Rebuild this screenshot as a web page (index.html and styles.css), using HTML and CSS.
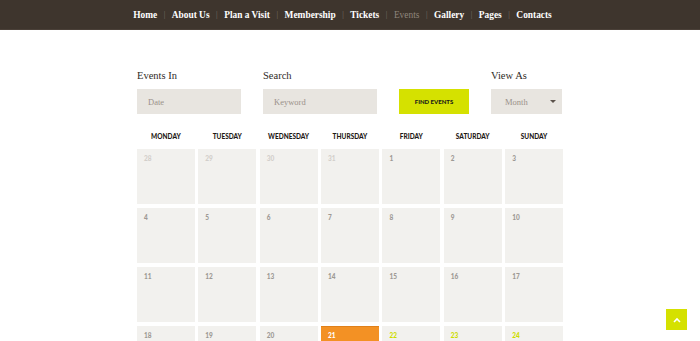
FILE: index.html
```html
<!DOCTYPE html>
<html lang="en">
<head>
    <meta charset="UTF-8">
    <meta name="viewport" content="width=device-width, initial-scale=1.0">
    <title>Events</title>
    <link rel="stylesheet" href="styles.css">
</head>
<body>
    <header class="topbar">
        <nav class="menu">
            <a href="#">Home</a><span class="sep">|</span>
            <a href="#">About Us</a><span class="sep">|</span>
            <a href="#">Plan a Visit</a><span class="sep">|</span>
            <a href="#">Membership</a><span class="sep">|</span>
            <a href="#">Tickets</a><span class="sep">|</span>
            <a href="#" class="current">Events</a><span class="sep">|</span>
            <a href="#">Gallery</a><span class="sep">|</span>
            <a href="#">Pages</a><span class="sep">|</span>
            <a href="#">Contacts</a>
        </nav>
    </header>

    <main class="container">
        <div class="filters">
            <div class="field field-date">
                <label>Events In</label>
                <div class="box">Date</div>
            </div>
            <div class="field field-search">
                <label>Search</label>
                <div class="box">Keyword</div>
            </div>
            <div class="field field-button">
                <button class="find">FIND EVENTS</button>
            </div>
            <div class="field field-view">
                <label>View As</label>
                <div class="box select">Month <span class="caret"></span></div>
            </div>
        </div>

        <div class="calendar">
            <div class="dayname">Monday</div>
            <div class="dayname">Tuesday</div>
            <div class="dayname">Wednesday</div>
            <div class="dayname">Thursday</div>
            <div class="dayname">Friday</div>
            <div class="dayname">Saturday</div>
            <div class="dayname">Sunday</div>

            <div class="cell past">28</div>
            <div class="cell past">29</div>
            <div class="cell past">30</div>
            <div class="cell past">31</div>
            <div class="cell">1</div>
            <div class="cell">2</div>
            <div class="cell">3</div>

            <div class="cell">4</div>
            <div class="cell">5</div>
            <div class="cell">6</div>
            <div class="cell">7</div>
            <div class="cell">8</div>
            <div class="cell">9</div>
            <div class="cell">10</div>

            <div class="cell">11</div>
            <div class="cell">12</div>
            <div class="cell">13</div>
            <div class="cell">14</div>
            <div class="cell">15</div>
            <div class="cell">16</div>
            <div class="cell">17</div>

            <div class="cell">18</div>
            <div class="cell">19</div>
            <div class="cell">20</div>
            <div class="cell today">21</div>
            <div class="cell upcoming">22</div>
            <div class="cell upcoming">23</div>
            <div class="cell upcoming">24</div>
        </div>
    </main>

    <a href="#" class="to-top">
        <svg width="8" height="6" viewBox="0 0 8 6"><path d="M1 5 L4 2 L7 5" fill="none" stroke="#fff" stroke-width="1.6"/></svg>
    </a>
</body>
</html>
```

FILE: styles.css
```css
body {
    margin: 0;
    padding: 0;
    background-color: #fff;
    font-family: 'Liberation Serif', serif;
    height: 341px;
    overflow: hidden;
}

.topbar {
    background-color: #3e352d;
    height: 29px;
    border-bottom: 1px solid #4a4038;
    display: flex;
    justify-content: center;
    align-items: center;
}

.menu {
    display: flex;
    align-items: center;
    gap: 6.5px;
    margin-left: -15px;
}

.menu a {
    color: #fff;
    text-decoration: none;
    font-weight: bold;
    font-size: 9.4px;
}

.menu a.current {
    color: #8f857c;
    font-weight: normal;
}

.menu .sep {
    color: #7a7068;
    font-size: 8px;
}

.container {
    width: 426px;
    margin: 0 auto;
    padding-top: 40px;
}

.filters {
    display: flex;
    align-items: flex-end;
}

.field label {
    display: block;
    font-size: 10.5px;
    color: #2f2a26;
    margin-bottom: 8px;
}

.box {
    height: 25px;
    background-color: #e8e5e0;
    color: #9b918a;
    font-size: 8.5px;
    display: flex;
    align-items: center;
    padding-left: 11px;
    box-sizing: border-box;
}

.field-date .box {
    width: 104px;
}

.field-search {
    margin-left: 22px;
}

.field-search .box {
    width: 114px;
}

.field-button {
    margin-left: 22px;
}

.find {
    width: 70px;
    height: 25px;
    border: none;
    background-color: #d5e100;
    color: #1a1a1a;
    font-family: 'Lato', sans-serif;
    font-weight: 900;
    font-size: 6px;
    padding: 0;
    cursor: pointer;
}

.field-view {
    margin-left: 22px;
}

.select {
    width: 71px;
    position: relative;
    padding-left: 14px;
}

.caret {
    position: absolute;
    right: 6px;
    top: 11px;
    width: 0;
    height: 0;
    border-left: 3px solid transparent;
    border-right: 3px solid transparent;
    border-top: 3px solid #5b524b;
}

.calendar {
    display: grid;
    grid-template-columns: repeat(7, 1fr);
    column-gap: 3.5px;
    row-gap: 4px;
    margin-top: 19px;
}

.dayname {
    text-align: center;
    font-family: 'Lato', sans-serif;
    font-weight: 900;
    font-size: 6.5px;
    text-transform: uppercase;
    color: #1f1a16;
    height: 8px;
    margin-bottom: 4px;
}

.cell {
    height: 55px;
    background-color: #f2f1ee;
    font-family: 'Lato', sans-serif;
    font-weight: 900;
    font-size: 6.5px;
    color: #9d9994;
    padding: 6px 0 0 7px;
    box-sizing: border-box;
}

.cell.past {
    color: #d2cfcb;
}

.cell.today {
    background-color: #f39124;
    border-top: 1px solid #e0801a;
    color: #fff;
    padding-top: 5px;
}

.cell.upcoming {
    color: #cddc00;
}

.to-top {
    position: fixed;
    left: 666px;
    top: 309px;
    width: 21px;
    height: 21px;
    background-color: #d5e100;
    display: flex;
    justify-content: center;
    align-items: center;
}
```
